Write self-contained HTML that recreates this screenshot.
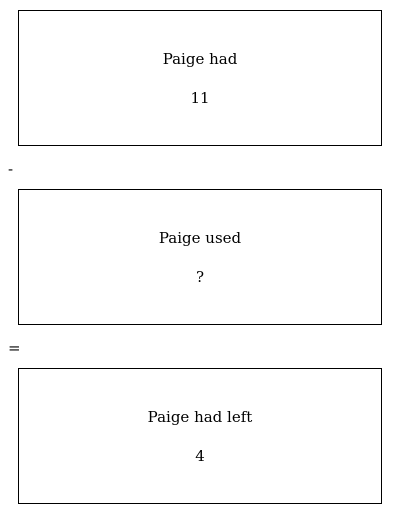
<!DOCTYPE html>
<html><head><style>
body{margin:0;background:#fff;font-family:"DejaVu Serif",serif;font-size:15px;color:#000;width:400px;height:514px;position:relative;overflow:hidden}
.box{position:absolute;left:18px;width:362px;height:134px;border:1px solid #000}
.t{position:absolute;left:0;right:0;text-align:center;line-height:18px}
.op{position:absolute;left:8px;font-size:15px;line-height:18px}
</style></head><body>
<div class="box" style="top:10px"><div class="t" style="top:39px">Paige had</div><div class="t" style="top:78px">11</div></div>
<div class="op" style="top:160px">-</div>
<div class="box" style="top:189px"><div class="t" style="top:39px">Paige used</div><div class="t" style="top:78px">?</div></div>
<div class="op" style="top:339px">=</div>
<div class="box" style="top:368px"><div class="t" style="top:39px">Paige had left</div><div class="t" style="top:78px">4</div></div>
</body></html>
